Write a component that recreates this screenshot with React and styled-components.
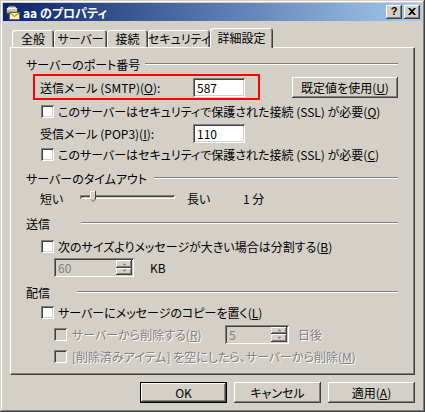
import React from "react";
import styled, { createGlobalStyle, css } from "styled-components";

const Global = createGlobalStyle`
  html, body { margin: 0; padding: 0; background: #d4d0c8; }
  * { box-sizing: border-box; }
`;

const raised = css`
  box-shadow: inset -1px -1px #404040, inset 1px 1px #fff, inset -2px -2px #808080, inset 2px 2px #d4d0c8;
`;

const sunken = css`
  box-shadow: inset 1px 1px #808080, inset -1px -1px #fff, inset 2px 2px #404040, inset -2px -2px #d4d0c8;
`;

const Window = styled.div`
  width: 425px;
  height: 412px;
  padding: 3px;
  background: #d4d0c8;
  display: flex;
  flex-direction: column;
  font-family: "Noto Sans CJK JP", "Noto Sans", sans-serif;
  font-feature-settings: "palt";
  font-size: 12px;
  color: #000;
  box-shadow: inset -1px -1px #404040, inset 1px 1px #d4d0c8, inset -2px -2px #808080, inset 2px 2px #fff;
`;

const TitleBar = styled.div`
  height: 18px;
  display: flex;
  align-items: center;
  padding: 0 2px;
  background: linear-gradient(to right, #0a246a, #a6caf0);
  color: #fff;
  font-weight: bold;
`;

const TitleText = styled.span`
  margin-left: 2px;
  white-space: nowrap;
`;

const CaptionButtons = styled.div`
  margin-left: auto;
  display: flex;
  gap: 2px;
`;

const CaptionButton = styled.div`
  width: 16px;
  height: 14px;
  background: #d4d0c8;
  ${raised};
  display: flex;
  align-items: center;
  justify-content: center;
  color: #000;
  font-family: "Liberation Sans", sans-serif;
  font-weight: bold;
  font-size: 11px;
  line-height: 1;
  padding-bottom: 1px;
`;

const TabStrip = styled.div`
  margin-top: 7px;
  height: 19px;
  padding-left: 9px;
  display: flex;
  align-items: flex-end;
`;

const Tab = styled.div`
  width: ${(p) => p.$w}px;
  height: ${(p) => (p.$active ? 20 : 17)}px;
  margin-bottom: ${(p) => (p.$active ? -1 : 0)}px;
  position: relative;
  z-index: ${(p) => (p.$active ? 2 : 0)};
  background: #d4d0c8;
  border-radius: 3px 3px 0 0;
  box-shadow: inset 1px 1px #fff, inset -1px 0 #404040, inset -2px 0 #808080;
  display: flex;
  align-items: center;
  justify-content: center;
  white-space: nowrap;
  padding-bottom: ${(p) => (p.$active ? 2 : 0)}px;
`;

const Panel = styled.div`
  margin-left: 7px;
  width: 405px;
  height: 328px;
  border-top: 1px solid #fff;
  border-left: 1px solid #fff;
  border-right: 1px solid #404040;
  border-bottom: 1px solid #404040;
  box-shadow: inset -1px -1px #808080;
  display: flex;
  flex-direction: column;
  padding-right: 16px;
`;

const Row = styled.div`
  display: flex;
  align-items: center;
  height: ${(p) => p.$h}px;
  margin-top: ${(p) => p.$mt}px;
  padding-left: ${(p) => p.$pl}px;
  white-space: nowrap;
`;

const GroupLabel = styled.span`
  width: ${(p) => p.$w}px;
  flex: none;
`;

const Etched = styled.div`
  flex: 1;
  height: 2px;
  border-top: 1px solid #808080;
  border-bottom: 1px solid #fff;
`;

const RedBox = styled.div`
  width: 227px;
  height: 26px;
  border: 2px solid #ff0000;
  display: flex;
  align-items: center;
  padding-left: 5px;
`;

const FieldLabel = styled.span`
  width: ${(p) => p.$w}px;
  flex: none;
  color: ${(p) => (p.$disabled ? "#808080" : "#000")};
  text-shadow: ${(p) => (p.$disabled ? "1px 1px 0 #fff" : "none")};
`;

const Field = styled.div`
  width: ${(p) => p.$w}px;
  height: 19px;
  flex: none;
  background: ${(p) => (p.$disabled ? "#d4d0c8" : "#fff")};
  color: ${(p) => (p.$disabled ? "#808080" : "#000")};
  ${sunken};
  display: flex;
  align-items: center;
  padding: 2px 2px 2px 4px;
`;

const SpinColumn = styled.div`
  margin-left: auto;
  width: 16px;
  height: 15px;
  display: flex;
  flex-direction: column;
`;

const SpinHalf = styled.div`
  flex: 1;
  background: #d4d0c8;
  ${raised};
  display: flex;
  align-items: center;
  justify-content: center;
`;

const PushButton = styled.div`
  width: ${(p) => p.$w}px;
  height: 21px;
  flex: none;
  margin-left: ${(p) => p.$ml || 0}px;
  background: #d4d0c8;
  ${raised};
  display: flex;
  align-items: center;
  justify-content: center;
  white-space: nowrap;
  ${(p) =>
    p.$default &&
    css`
      border: 1px solid #000;
      box-shadow: inset -1px -1px #404040, inset 1px 1px #fff, inset -2px -2px #808080;
    `}
`;

const CheckRow = styled.label`
  display: flex;
  align-items: center;
  gap: ${(p) => (p.$disabled ? 5 : 4)}px;
  color: ${(p) => (p.$disabled ? "#808080" : "#000")};
  text-shadow: ${(p) => (p.$disabled ? "1px 1px 0 #fff" : "none")};
`;

const CheckBox = styled.span`
  width: 13px;
  height: 13px;
  flex: none;
  background: ${(p) => (p.$disabled ? "#d4d0c8" : "#fff")};
  ${sunken};
`;

const Slider = styled.div`
  position: relative;
  width: 95px;
  height: 4px;
  flex: none;
  margin-top: -2px;
  ${sunken};
  box-shadow: inset 1px 1px #808080, inset -1px -1px #fff, inset 2px 2px #404040;
`;

const Thumb = styled.svg`
  position: absolute;
  left: 10px;
  top: -4px;
`;

const ButtonBar = styled.div`
  margin-top: 7px;
  padding-right: 7px;
  display: flex;
  justify-content: flex-end;
  gap: 7px;
`;

const MailIcon = () => (
  <svg width="16" height="16" viewBox="0 0 16 16">
    <path d="M1.5 7.5 V4.5 L4 2 H10 L12.5 4.5 V9.5 H1.5 Z" fill="#c8c8c8" stroke="#404040" />
    <path d="M2.5 4.5 H11.5" stroke="#fff" />
    <path d="M2 8 H12" stroke="#808080" />
    <rect x="4.5" y="8.5" width="10" height="7" fill="#fff7a8" stroke="#7a6a20" />
    <path d="M4.5 8.5 L9.5 12.5 L14.5 8.5" fill="none" stroke="#7a6a20" />
  </svg>
);

const CloseGlyph = () => (
  <svg width="8" height="7" viewBox="0 0 8 7">
    <path d="M0 0 L2 0 L4 2 L6 0 L8 0 L5 3.5 L8 7 L6 7 L4 5 L2 7 L0 7 L3 3.5 Z" fill="#000" />
  </svg>
);

const Arrow = ({ up }) => (
  <svg width="5" height="4" viewBox="0 0 5 4">
    <path d={up ? "M1 3 H4 L2.5 1.5 Z" : "M1 1 H4 L2.5 2.5 Z"} fill="#808080" stroke="#808080" strokeWidth="0.5" />
  </svg>
);

const Spinner = ({ w, value }) => (
  <Field $w={w} $disabled>
    {value}
    <SpinColumn>
      <SpinHalf><Arrow up /></SpinHalf>
      <SpinHalf><Arrow /></SpinHalf>
    </SpinColumn>
  </Field>
);

const Check = ({ disabled, children }) => (
  <CheckRow $disabled={disabled}>
    <CheckBox $disabled={disabled} />
    <span>{children}</span>
  </CheckRow>
);

const GroupHeader = ({ mt, w, children }) => (
  <Row $h={14} $mt={mt} $pl={15}>
    <GroupLabel $w={w}>{children}</GroupLabel>
    <Etched />
  </Row>
);

const tabs = [
  { label: "全般", w: 42 },
  { label: "サーバー", w: 53 },
  { label: "接続", w: 41 },
  { label: "セキュリティ", w: 62 },
  { label: "詳細設定", w: 63, active: true },
];

const App = () => {
  return (
    <Window>
      <Global />
      <TitleBar>
        <MailIcon />
        <TitleText>aa のプロパティ</TitleText>
        <CaptionButtons>
          <CaptionButton>?</CaptionButton>
          <CaptionButton><CloseGlyph /></CaptionButton>
        </CaptionButtons>
      </TitleBar>

      <TabStrip>
        {tabs.map((t) => (
          <Tab key={t.label} $w={t.w} $active={t.active}>{t.label}</Tab>
        ))}
      </TabStrip>

      <Panel>
        <GroupHeader mt={9} w={119}>サーバーのポート番号</GroupHeader>
        <Row $h={26} $mt={3} $pl={22}>
          <RedBox>
            <FieldLabel $w={153}>送信メール (SMTP)(<u>O</u>):</FieldLabel>
            <Field $w={52}>587</Field>
          </RedBox>
          <PushButton $w={106} $ml={32}>既定値を使用(<u>U</u>)</PushButton>
        </Row>
        <Row $h={20} $mt={1} $pl={30}>
          <Check>このサーバーはセキュリティで保護された接続 (SSL) が必要(<u>Q</u>)</Check>
        </Row>
        <Row $h={20} $mt={2} $pl={29}>
          <FieldLabel $w={153}>受信メール (POP3)(<u>I</u>):</FieldLabel>
          <Field $w={52}>110</Field>
        </Row>
        <Row $h={20} $mt={1} $pl={30}>
          <Check>このサーバーはセキュリティで保護された接続 (SSL) が必要(<u>C</u>)</Check>
        </Row>

        <GroupHeader mt={7} w={128}>サーバーのタイムアウト</GroupHeader>
        <Row $h={20} $mt={3} $pl={29}>
          <FieldLabel $w={40}>短い</FieldLabel>
          <Slider>
            <Thumb width="6" height="11" viewBox="0 0 6 11">
              <path d="M0 0 H6 V8 L3 11 L0 8 Z" fill="#d4d0c8" />
              <path d="M0.5 8 V0.5 H5" fill="none" stroke="#fff" />
              <path d="M5.5 0 V8 L3 10.5" fill="none" stroke="#404040" />
              <path d="M0.5 8.2 L2.8 10.3" fill="none" stroke="#808080" />
            </Thumb>
          </Slider>
          <FieldLabel $w={56} style={{ marginLeft: 12 }}>長い</FieldLabel>
          <FieldLabel $w={40}>1 分</FieldLabel>
        </Row>

        <GroupHeader mt={8} w={55}>送信</GroupHeader>
        <Row $h={20} $mt={6} $pl={30}>
          <Check>次のサイズよりメッセージが大きい場合は分割する(<u>B</u>)</Check>
        </Row>
        <Row $h={19} $mt={2} $pl={43}>
          <Spinner w={80} value="60" />
          <FieldLabel $w={40} style={{ marginLeft: 16 }}>KB</FieldLabel>
        </Row>

        <GroupHeader mt={8} w={51}>配信</GroupHeader>
        <Row $h={20} $mt={3} $pl={30}>
          <Check>サーバーにメッセージのコピーを置く(<u>L</u>)</Check>
        </Row>
        <Row $h={20} $mt={2} $pl={43}>
          <CheckRow $disabled>
            <CheckBox $disabled />
            <FieldLabel $w={153} $disabled>サーバーから削除する(<u>R</u>)</FieldLabel>
          </CheckRow>
          <Spinner w={64} value="5" />
          <FieldLabel $w={40} $disabled style={{ marginLeft: 9 }}>日後</FieldLabel>
        </Row>
        <Row $h={20} $mt={2} $pl={43}>
          <Check disabled>[削除済みアイテム] を空にしたら、サーバーから削除(<u>M</u>)</Check>
        </Row>
      </Panel>

      <ButtonBar>
        <PushButton $w={87} $default>OK</PushButton>
        <PushButton $w={87}>キャンセル</PushButton>
        <PushButton $w={87}>適用(<u>A</u>)</PushButton>
      </ButtonBar>
    </Window>
  );
};

export default App;
